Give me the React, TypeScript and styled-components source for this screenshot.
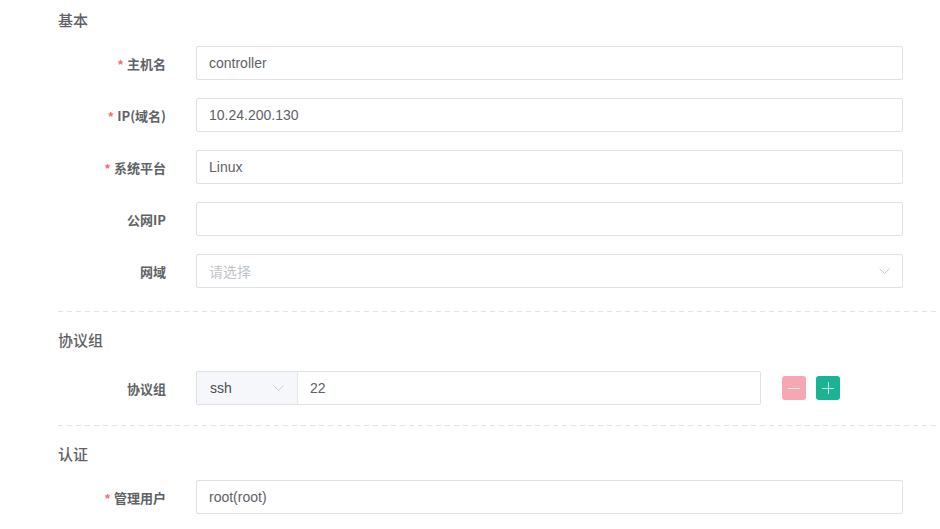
import React from "react";
import styled, { createGlobalStyle } from "styled-components";

const Global = createGlobalStyle`
  html, body { margin: 0; padding: 0; background: #fff; }
  body { font-family: "Liberation Sans", "Noto Sans CJK SC", Arial, sans-serif; }
  * { box-sizing: border-box; }
`;

const Page = styled.div`
  width: 940px;
  padding: 10px 0 0 58px;
`;

const Section = styled.section`
  display: flex;
  flex-direction: column;
`;

const SectionTitle = styled.h3<{ $gap: number }>`
  margin: 0 0 ${(p) => p.$gap}px 0;
  font-family: "Noto Sans CJK SC", sans-serif;
  font-size: 15px;
  line-height: 20px;
  font-weight: 500;
  color: #5f6166;
`;

const Divider = styled.div<{ $top: number }>`
  height: 1px;
  margin: ${(p) => p.$top}px 0 18px 0;
  background: repeating-linear-gradient(to right, #e2e4e8 0 5px, transparent 5px 9px);
`;

const Row = styled.div`
  display: flex;
  align-items: center;
  height: 34px;
  margin-bottom: 18px;
  &:last-child { margin-bottom: 0; }
`;

const Label = styled.label`
  width: 138px;
  padding-right: 30px;
  text-align: right;
  font-family: "Noto Sans CJK SC", sans-serif;
  font-size: 13px;
  font-weight: 700;
  color: #606266;
  white-space: nowrap;
`;

const Star = styled.span`
  color: #f56c6c;
  margin-right: 4px;
  font-family: "Liberation Sans", sans-serif;
`;

const Field = styled.div`
  width: 707px;
  height: 34px;
  border: 1px solid #dfe1e6;
  border-radius: 2px;
  display: flex;
  align-items: center;
  padding: 0 12px;
  font-size: 14px;
  color: #5f6166;
  position: relative;
`;

const Placeholder = styled.span`
  font-family: "Noto Sans CJK SC", sans-serif;
  color: #c0c4cc;
  font-size: 14px;
`;

const Chevron = styled.svg`
  position: absolute;
  right: 11px;
  top: 50%;
  margin-top: -3px;
`;

const Group = styled.div`
  display: flex;
  width: 565px;
  height: 34px;
`;

const GroupSelect = styled.div`
  width: 102px;
  height: 34px;
  background: #f5f7fa;
  border: 1px solid #dfe1e6;
  border-right: 1px solid #e6e8ec;
  border-radius: 2px 0 0 2px;
  display: flex;
  align-items: center;
  padding: 0 13px;
  font-size: 14px;
  color: #4a4c50;
  position: relative;
`;

const GroupInput = styled.div`
  flex: 1;
  height: 34px;
  border: 1px solid #dfe1e6;
  border-left: none;
  border-radius: 0 2px 2px 0;
  display: flex;
  align-items: center;
  padding: 0 12px;
  font-size: 14px;
  color: #5f6166;
`;

const Actions = styled.div`
  display: flex;
  gap: 10px;
  margin-left: 21px;
`;

const IconButton = styled.button<{ $bg: string }>`
  width: 24px;
  height: 24px;
  padding: 0;
  border: none;
  border-radius: 3px;
  background: ${(p) => p.$bg};
  display: flex;
  align-items: center;
  justify-content: center;
`;

const ChevronIcon = ({ right }: { right: number }) => (
  <Chevron width="11" height="6" viewBox="0 0 11 6" style={{ right }}>
    <path d="M0.5 0.5 L5.5 5.5 L10.5 0.5" fill="none" stroke="#c8cbd1" strokeWidth="1" />
  </Chevron>
);

type Item = { label: string; required?: boolean; value?: string; placeholder?: string; select?: boolean };

const basic: Item[] = [
  { label: "主机名", required: true, value: "controller" },
  { label: "IP(域名)", required: true, value: "10.24.200.130" },
  { label: "系统平台", required: true, value: "Linux" },
  { label: "公网IP" },
  { label: "网域", placeholder: "请选择", select: true },
];

const FormRow = ({ item }: { item: Item }) => (
  <Row>
    <Label>
      {item.required && <Star>*</Star>}
      {item.label}
    </Label>
    <Field>
      {item.value}
      {item.placeholder && <Placeholder>{item.placeholder}</Placeholder>}
      {item.select && <ChevronIcon right={12} />}
    </Field>
  </Row>
);

export default function App() {
  return (
    <>
      <Global />
      <Page>
        <Section>
          <SectionTitle $gap={16}>基本</SectionTitle>
          {basic.map((it) => (
            <FormRow key={it.label} item={it} />
          ))}
        </Section>
        <Divider $top={23} />
        <Section>
          <SectionTitle $gap={21}>协议组</SectionTitle>
          <Row>
            <Label>协议组</Label>
            <Group>
              <GroupSelect>
                ssh
                <ChevronIcon right={13} />
              </GroupSelect>
              <GroupInput>22</GroupInput>
            </Group>
            <Actions>
              <IconButton $bg="#f5a8b1" aria-label="remove">
                <svg width="12" height="12" viewBox="0 0 12 12">
                  <path d="M0 6.5 H12" stroke="#fde9ec" strokeWidth="1" />
                </svg>
              </IconButton>
              <IconButton $bg="#1ab394" aria-label="add">
                <svg width="12" height="12" viewBox="0 0 12 12">
                  <path d="M0 6.5 H12 M6.5 0 V12" stroke="#c8efe5" strokeWidth="1" />
                </svg>
              </IconButton>
            </Actions>
          </Row>
        </Section>
        <Divider $top={20} />
        <Section>
          <SectionTitle $gap={16}>认证</SectionTitle>
          <FormRow item={{ label: "管理用户", required: true, value: "root(root)" }} />
        </Section>
      </Page>
    </>
  );
}
